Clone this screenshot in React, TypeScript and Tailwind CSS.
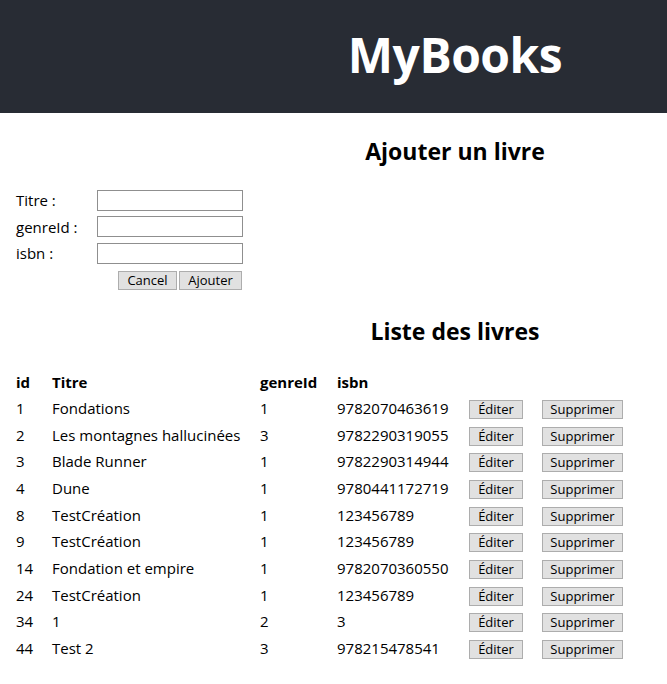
const books = [
  { id: 1, titre: "Fondations", genreId: 1, isbn: "9782070463619" },
  { id: 2, titre: "Les montagnes hallucinées", genreId: 3, isbn: "9782290319055" },
  { id: 3, titre: "Blade Runner", genreId: 1, isbn: "9782290314944" },
  { id: 4, titre: "Dune", genreId: 1, isbn: "9780441172719" },
  { id: 8, titre: "TestCréation", genreId: 1, isbn: "123456789" },
  { id: 9, titre: "TestCréation", genreId: 1, isbn: "123456789" },
  { id: 14, titre: "Fondation et empire", genreId: 1, isbn: "9782070360550" },
  { id: 24, titre: "TestCréation", genreId: 1, isbn: "123456789" },
  { id: 34, titre: "1", genreId: 2, isbn: "3" },
  { id: 44, titre: "Test 2", genreId: 3, isbn: "978215478541" },
]

const btn =
  "h-[19px] border border-[#adadad] bg-[#e1e1e1] px-[6px] text-[13px] leading-[17px] text-black"

function Field({ label }: { label: string }) {
  return (
    <div className="flex h-[26.5px] items-center">
      <label className="w-[81px]">{label}</label>
      <input type="text" className="h-[21px] w-[146px] border border-[#8f8f8f] bg-white" />
    </div>
  )
}

export default function App() {
  return (
    <div className="min-h-[684px] bg-white font-['Open_Sans',sans-serif] text-[15px] text-black">
      <header className="flex h-[113px] items-center bg-[#282c34] pl-[243px]">
        <h1 className="w-full pb-[4px] text-center text-[48px] font-bold tracking-[-0.5px] text-white">MyBooks</h1>
      </header>

      <h2 className="mt-[24px] pl-[243px] text-center text-[23px] font-bold leading-[28px]">Ajouter un livre</h2>

      <form className="mt-[22px] px-[16px]">
        <Field label="Titre :" />
        <Field label="genreId :" />
        <Field label="isbn :" />
        <div className="mt-[4px] flex w-[242px] justify-end gap-[2px] pr-[16px]">
          <button type="button" className={`${btn} w-[59px]`}>Cancel</button>
          <button type="button" className={`${btn} w-[63px]`}>Ajouter</button>
        </div>
      </form>

      <h2 className="mt-[27px] pl-[243px] text-center text-[23px] font-bold leading-[28px]">Liste des livres</h2>

      <table className="mt-[24px] ml-[16px] border-collapse text-left">
        <thead>
          <tr className="h-[26.5px] font-bold">
            <th className="w-[36px] p-0">id</th>
            <th className="w-[208px] p-0">Titre</th>
            <th className="w-[77px] p-0">genreId</th>
            <th className="w-[132px] p-0">isbn</th>
            <th className="w-[73px] p-0"></th>
            <th className="p-0"></th>
          </tr>
        </thead>
        <tbody>
          {books.map((b) => (
            <tr key={b.id} className="h-[26.65px]">
              <td className="p-0">{b.id}</td>
              <td className="p-0">{b.titre}</td>
              <td className="p-0">{b.genreId}</td>
              <td className="p-0">{b.isbn}</td>
              <td className="p-0">
                <button type="button" className={`${btn} w-[54px]`}>Éditer</button>
              </td>
              <td className="p-0">
                <button type="button" className={`${btn} w-[81px]`}>Supprimer</button>
              </td>
            </tr>
          ))}
        </tbody>
      </table>
    </div>
  )
}
